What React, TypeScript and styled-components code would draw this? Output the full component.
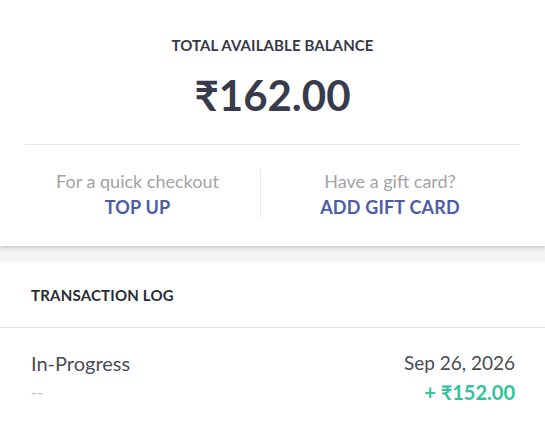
import React from "react";
import styled, { createGlobalStyle } from "styled-components";

const Global = createGlobalStyle`
  html, body { margin: 0; padding: 0; background: #ffffff; }
  body { font-family: "Lato", "Open Sans", "Liberation Sans", sans-serif; }
  * { box-sizing: border-box; }
`;

const Page = styled.div`
  width: 545px;
  height: 428px;
  overflow: hidden;
  background: #f4f4f5;
  display: flex;
  flex-direction: column;
`;

const BalanceCard = styled.section`
  background: #ffffff;
  height: 246px;
  box-shadow: 0 2px 4px rgba(0, 0, 0, 0.18);
  display: flex;
  flex-direction: column;
  align-items: center;
  padding-top: 35px;
  position: relative;
  z-index: 1;
`;

const Label = styled.div`
  font-size: 15px;
  font-weight: 700;
  color: #363a48;
  letter-spacing: 0.1px;
  line-height: 20px;
`;

const Amount = styled.div`
  font-size: 42px;
  font-weight: 700;
  color: #383b4b;
  line-height: 50px;
  margin-top: 15px;
`;

const Divider = styled.hr`
  align-self: stretch;
  margin: 24px 25px 0 25px;
  border: none;
  border-top: 1px solid #e6e6e8;
`;

const Actions = styled.div`
  align-self: stretch;
  display: grid;
  grid-template-columns: 246px 258px;
  margin: 25px 0 0 15px;
`;

const Action = styled.div<{ $divider?: boolean }>`
  display: flex;
  flex-direction: column;
  align-items: center;
  border-right: ${(p) => (p.$divider ? "1px solid #ececee" : "none")};
  height: 48px;
`;

const Hint = styled.span`
  font-size: 18px;
  color: #a3a3a6;
  line-height: 22px;
`;

const Link = styled.a`
  font-size: 18px;
  font-weight: 700;
  color: #4b5da6;
  line-height: 26px;
  margin-top: 2px;
  text-decoration: none;
  letter-spacing: 0.2px;
`;

const Gap = styled.div`
  height: 16px;
`;

const LogCard = styled.section`
  background: #ffffff;
  flex: 1;
`;

const LogHeader = styled.div`
  height: 66px;
  border-bottom: 1px solid #e4e4e6;
  display: flex;
  align-items: center;
  padding-left: 31px;
  font-size: 15px;
  font-weight: 700;
  color: #2a2c35;
  letter-spacing: 0.2px;
`;

const Row = styled.div`
  display: flex;
  justify-content: space-between;
  padding: 21px 30px 0 31px;
`;

const Col = styled.div<{ $right?: boolean }>`
  display: flex;
  flex-direction: column;
  align-items: ${(p) => (p.$right ? "flex-end" : "flex-start")};
`;

const Primary = styled.span<{ $narrow?: boolean }>`
  font-size: ${(p) => (p.$narrow ? "19px" : "20px")};
  color: #4a4c55;
  line-height: 28px;
`;

const Dash = styled.span`
  font-size: 16px;
  color: #b5b5b8;
  line-height: 30px;
`;

const Credit = styled.span`
  font-size: 20px;
  font-weight: 700;
  color: #2fc49c;
  line-height: 30px;
`;

export default function App() {
  return (
    <>
      <Global />
      <Page>
        <BalanceCard>
          <Label>TOTAL AVAILABLE BALANCE</Label>
          <Amount>₹162.00</Amount>
          <Divider />
          <Actions>
            <Action $divider>
              <Hint>For a quick checkout</Hint>
              <Link>TOP UP</Link>
            </Action>
            <Action>
              <Hint>Have a gift card?</Hint>
              <Link>ADD GIFT CARD</Link>
            </Action>
          </Actions>
        </BalanceCard>
        <Gap />
        <LogCard>
          <LogHeader>TRANSACTION LOG</LogHeader>
          <Row>
            <Col>
              <Primary>In-Progress</Primary>
              <Dash>--</Dash>
            </Col>
            <Col $right>
              <Primary $narrow>Sep 26, 2026</Primary>
              <Credit>+ ₹152.00</Credit>
            </Col>
          </Row>
        </LogCard>
      </Page>
    </>
  );
}
